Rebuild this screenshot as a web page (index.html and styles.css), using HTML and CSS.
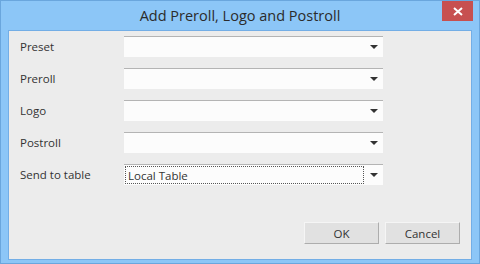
FILE: index.html
```html
<!DOCTYPE html>
<html lang="en">
<head>
  <meta charset="UTF-8" />
  <title>Add Preroll, Logo and Postroll</title>
  <link rel="stylesheet" href="styles.css">
</head>
<body>
  <div class="window">
    <div class="titlebar">
      <span class="title">Add Preroll, Logo and Postroll</span>
      <span class="close-btn">
        <svg width="10" height="9" viewBox="0 0 10 9"><path d="M1 1 L9 8 M9 1 L1 8" stroke="#fff" stroke-width="2"/></svg>
      </span>
    </div>

    <div class="client">
      <!-- form fields -->
      <div class="form-grid">
        <label class="field-label">Preset</label>
        <div class="combo"><span class="combo-value"></span><span class="combo-arrow"></span></div>

        <label class="field-label">Preroll</label>
        <div class="combo"><span class="combo-value"></span><span class="combo-arrow"></span></div>

        <label class="field-label">Logo</label>
        <div class="combo"><span class="combo-value"></span><span class="combo-arrow"></span></div>

        <label class="field-label">Postroll</label>
        <div class="combo"><span class="combo-value"></span><span class="combo-arrow"></span></div>

        <label class="field-label">Send to table</label>
        <div class="combo"><span class="combo-value focused">Local Table</span><span class="combo-arrow"></span></div>
      </div>

      <!-- buttons -->
      <div class="button-row">
        <button class="dlg-btn">OK</button>
        <button class="dlg-btn">Cancel</button>
      </div>
    </div>
  </div>
</body>
</html>
```

FILE: styles.css
```css
html, body {
  margin: 0;
  padding: 0;
}
body {
  font-family: "Open Sans", "Noto Sans", sans-serif;
  color: #333;
}
.window {
  width: 480px;
  height: 264px;
  box-sizing: border-box;
  background-color: #8cc6f7;
  border: 1px solid #6aa6dd;
  display: flex;
  flex-direction: column;
}
.titlebar {
  height: 29px;
  position: relative;
  display: flex;
  justify-content: center;
  align-items: center;
}
.title {
  font-size: 14.5px;
  color: #2b2b2b;
  margin-top: -1px;
}
.close-btn {
  position: absolute;
  top: 0;
  right: 6px;
  width: 31px;
  height: 20px;
  background-color: #c75050;
  display: flex;
  align-items: center;
  justify-content: center;
}
.client {
  margin: 0 7px 3px 7px;
  flex: 1;
  background-color: #ececec;
  border: 1px solid #73aee6;
  display: flex;
  flex-direction: column;
  padding: 5px 11px 15px 11px;
}
.form-grid {
  display: grid;
  grid-template-columns: 104px 259px;
  grid-auto-rows: 21px;
  row-gap: 11px;
}
.field-label {
  font-size: 11.5px;
  display: flex;
  align-items: center;
  color: #333;
}
.combo {
  background-color: #fcfcfc;
  border-top: 1px solid #b4b4b4;
  display: flex;
  align-items: stretch;
  padding: 1px 0 1px 1px;
}
.combo-value {
  flex: 1;
  font-size: 11.5px;
  display: flex;
  align-items: center;
  padding-left: 2px;
  margin-right: 6px;
  border: 1px solid transparent;
}
.combo-value.focused {
  border: 1px dotted #555;
}
.combo-arrow {
  width: 0;
  height: 0;
  border-left: 4px solid transparent;
  border-right: 4px solid transparent;
  border-top: 4px solid #333;
  align-self: center;
  margin-right: 5px;
}
.button-row {
  margin-top: auto;
  display: flex;
  justify-content: flex-end;
  gap: 6px;
}
.dlg-btn {
  width: 75px;
  height: 22px;
  font-family: inherit;
  font-size: 11.5px;
  color: #333;
  background-color: #e1e1e1;
  border: 1px solid #adadad;
  border-top-color: #f5f5f5;
  border-left-color: #f5f5f5;
  padding: 0;
}
```
